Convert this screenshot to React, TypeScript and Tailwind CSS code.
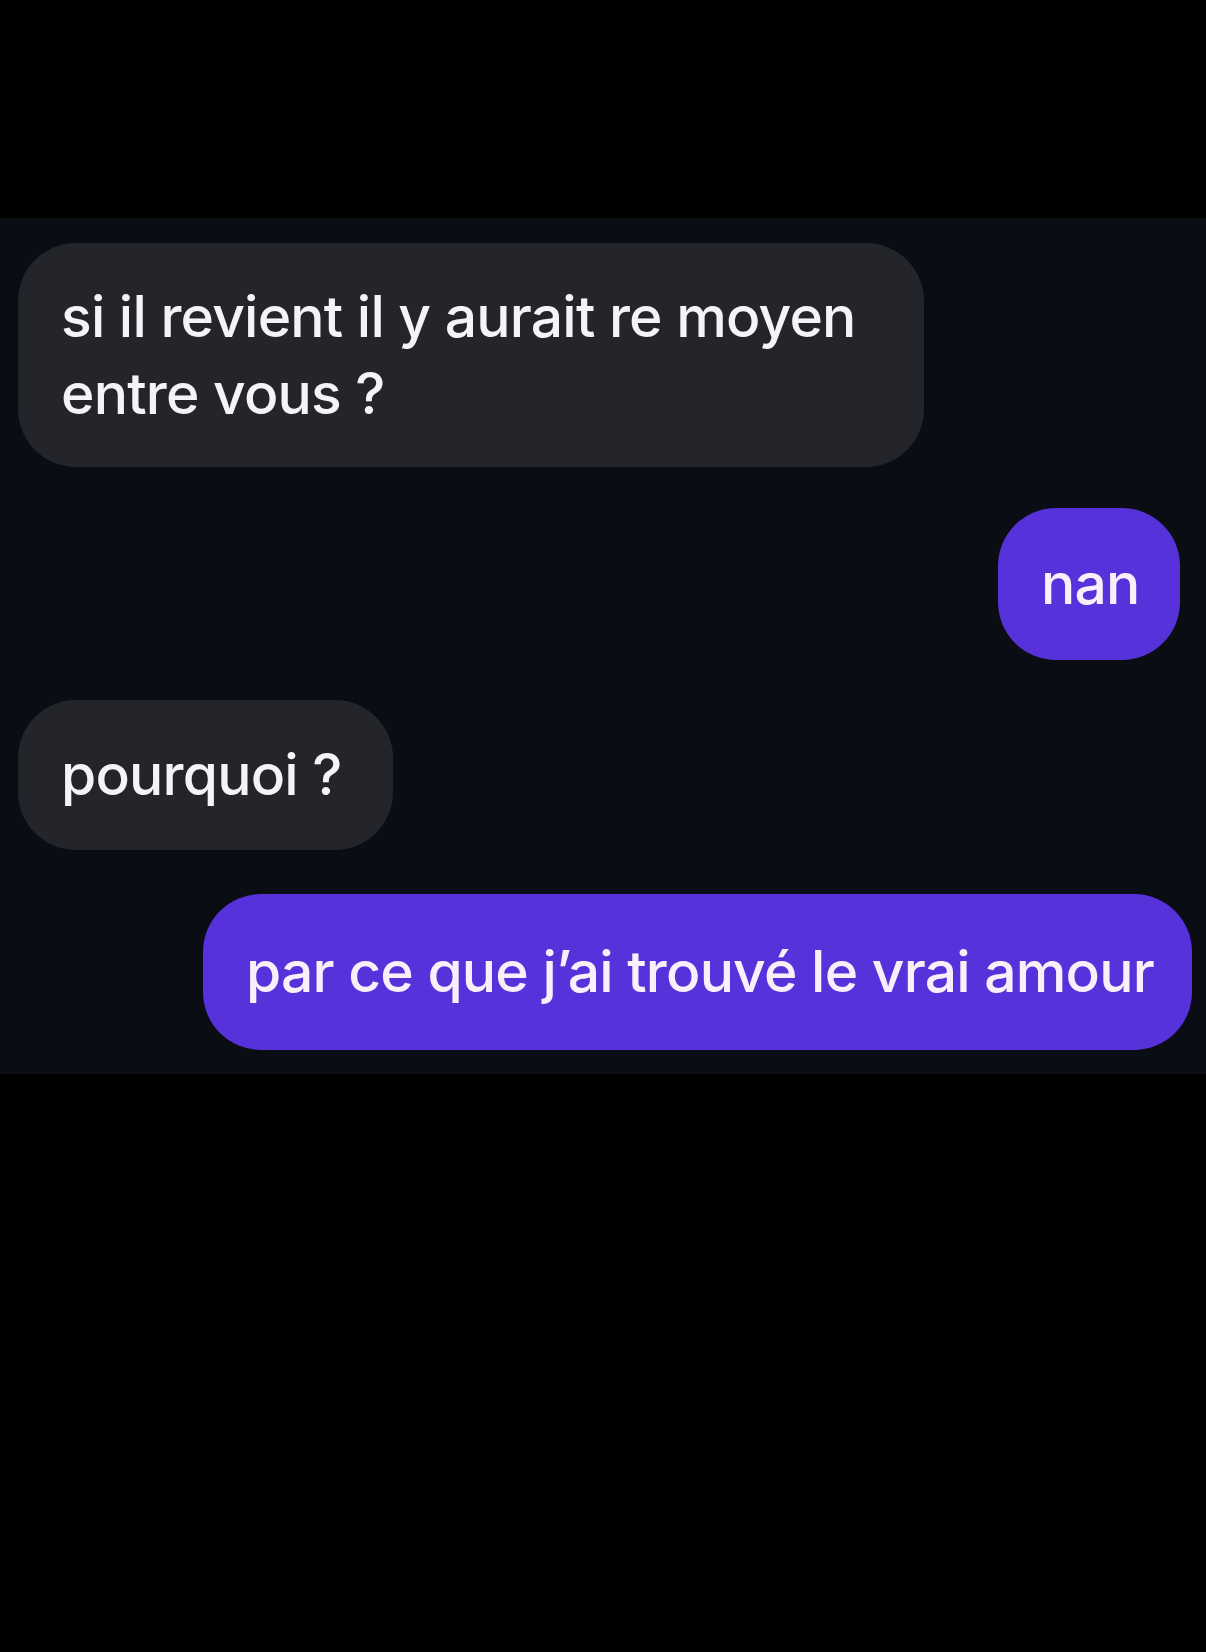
type Msg = { text: string; mine: boolean; box: string };

// spacing and sizes read off the screenshot, one bubble at a time
const messages: Msg[] = [
  { text: "si il revient il y aurait re moyen entre vous ?", mine: false, box: "mt-[25px] w-[906px] ml-[18px] py-[35px]" },
  { text: "nan", mine: true, box: "mt-[41px] w-[182px] mr-[26px] py-[37px] h-[152px] whitespace-nowrap text-center" },
  { text: "pourquoi ?", mine: false, box: "mt-[40px] w-[375px] ml-[18px] py-[36px] h-[150px] whitespace-nowrap" },
  { text: "par ce que j’ai trouvé le vrai amour", mine: true, box: "mt-[44px] w-[989px] mr-[14px] py-[39px] h-[156px] whitespace-nowrap" },
];

function Bubble({ msg }: { msg: Msg }) {
  return (
    <div className={msg.mine ? "flex justify-end" : "flex justify-start"}>
      <div
        className={
          "rounded-[58px] px-[43px] text-[57px] font-medium leading-[77px] tracking-[-0.8px] " +
          msg.box +
          (msg.mine ? " bg-[#5732da] text-[#f7f0fb]" : " bg-[#23252b] text-[#f4f4f6]")
        }
      >
        {msg.text}
      </div>
    </div>
  );
}

export default function App() {
  return (
    <div className="w-[1206px] h-[1652px] bg-black flex flex-col" style={{ fontFamily: "Inter, 'Noto Sans', sans-serif" }}>
      <div className="h-[218px] shrink-0" />
      <div className="bg-[#0a0d14] h-[856px] shrink-0 flex flex-col">
        {messages.map((m, i) => (
          <Bubble key={i} msg={m} />
        ))}
      </div>
      <div className="flex-1" />
    </div>
  );
}
